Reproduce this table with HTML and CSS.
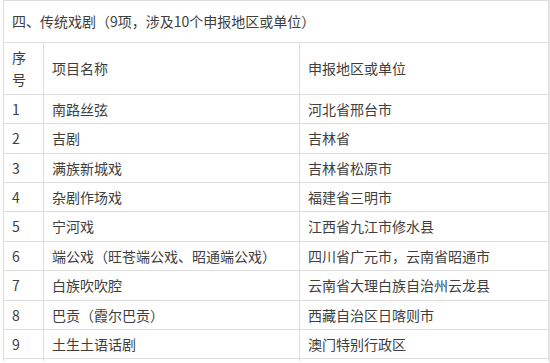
FILE: index.html
```html
<!DOCTYPE html>
<html lang="zh-CN">
<head>
<meta charset="utf-8">
<title>传统戏剧</title>
<link rel="stylesheet" href="styles.css">
</head>
<body>
<div class="page">
<table class="list">
  <colgroup>
    <col class="c-no">
    <col class="c-name">
    <col class="c-area">
  </colgroup>
  <tbody>
    <tr class="stub"><td></td><td></td><td></td></tr>
    <tr class="title"><td colspan="3">四、传统戏剧（9项，涉及10个申报地区或单位）</td></tr>
    <tr class="head"><td>序号</td><td>项目名称</td><td>申报地区或单位</td></tr>
    <tr><td>1</td><td>南路丝弦</td><td>河北省邢台市</td></tr>
    <tr><td>2</td><td>吉剧</td><td>吉林省</td></tr>
    <tr><td>3</td><td>满族新城戏</td><td>吉林省松原市</td></tr>
    <tr><td>4</td><td>杂剧作场戏</td><td>福建省三明市</td></tr>
    <tr><td>5</td><td>宁河戏</td><td>江西省九江市修水县</td></tr>
    <tr><td>6</td><td>端公戏（旺苍端公戏、昭通端公戏）</td><td>四川省广元市，云南省昭通市</td></tr>
    <tr><td>7</td><td>白族吹吹腔</td><td>云南省大理白族自治州云龙县</td></tr>
    <tr><td>8</td><td>巴贡（霞尔巴贡）</td><td>西藏自治区日喀则市</td></tr>
    <tr><td>9</td><td>土生土语话剧</td><td>澳门特别行政区</td></tr>
    <tr class="tail"><td></td><td></td><td></td></tr>
  </tbody>
</table>
</div>
</body>
</html>
```
FILE: styles.css
```css
html {
  background: #e9e9e9;
  overflow: hidden;
}
body {
  margin: 0;
  width: 549px;
  height: 363px;
  background: #fff;
  overflow: hidden;
}
.page {
  padding-left: 3px;
}
.list {
  border-collapse: separate;
  border-spacing: 0;
  table-layout: fixed;
  width: 546px;
  border-left: 1px solid #dedede;
  font-family: "Noto Sans CJK SC", "Microsoft YaHei", sans-serif;
  font-size: 14px;
  line-height: 22.4px;
  color: #3e3e3e;
}
.c-no { width: 40px; }
.c-name { width: 256px; }
.c-area { width: 249px; }
.list td {
  box-sizing: border-box;
  padding: 3px 8px;
  border-right: 1px solid #dedede;
  border-bottom: 1px solid #dedede;
  vertical-align: middle;
  text-align: left;
  word-break: break-all;
}
.list .stub td {
  padding: 0;
  height: 1px;
  line-height: 1px;
}
.list .title td {
  padding-top: 9.3px;
  padding-bottom: 9.3px;
}
.list .tail td {
  padding: 0;
  height: 2px;
  line-height: 1px;
  border-bottom: 0;
}
```
